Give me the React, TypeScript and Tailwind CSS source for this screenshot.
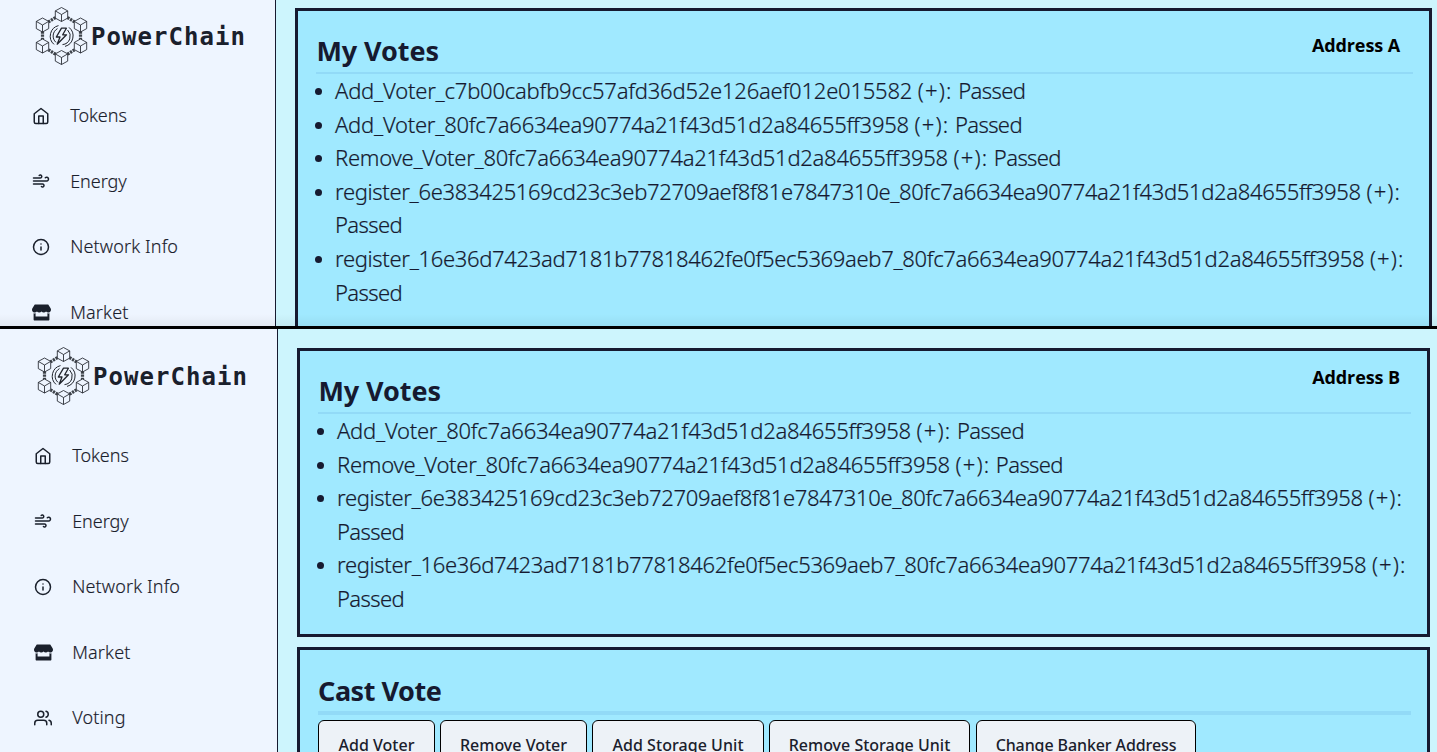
import type { ReactNode } from 'react';
import { FiHome, FiInfo, FiUsers, FiWind } from 'react-icons/fi';
import { FaStore } from 'react-icons/fa';

const cubes: [number, number][] = [
  [27.5, 9.5],
  [46.5, 20],
  [46.5, 41],
  [27.5, 52.5],
  [8.5, 41],
  [8.5, 20],
];

function Logo() {
  return (
    <svg width="56" height="62" viewBox="0 0 56 62" fill="none" stroke="#20242c" className="shrink-0">
      <g strokeWidth="3.2" strokeDasharray="2.2 0.9" opacity="0.85">
        <path d="M33.5 12.6 40.5 16.8M21.5 12.6 14.5 16.8M33.5 49.2 40.5 44.8M21.5 49.2 14.5 44.8M8.5 26.5v8M46.5 26.5v8" />
      </g>
      {cubes.map(([x, y]) => (
        <g key={`${x}-${y}`} transform={`translate(${x} ${y})`} strokeWidth="0.85" strokeLinejoin="round">
          <path d="M0-7 6.2-3.6V3.6L0 7-6.2 3.6V-3.6Z" fill="#eef5ff" />
          <path d="M-6.2-3.6 0 0 6.2-3.6M0 0V7" />
        </g>
      ))}
      <path d="M24.5 20.6A10.9 10.9 0 0 0 20 39.4M31 41.4A10.9 10.9 0 0 0 35 22.4" strokeWidth="1" />
      <path d="M23.5 23.6A8.5 8.5 0 0 0 22 37.4M28.5 39.6A8.5 8.5 0 0 0 33.6 25" strokeWidth="1" />
      <path
        d="M27.5 23.2 22.3 32H26L23.2 39.2 32.5 29.8H28.7L32.4 23.2Z"
        strokeWidth="1.3"
        strokeLinejoin="round"
      />
    </svg>
  );
}

const links = [
  { label: 'Tokens', icon: <FiHome size={18} />, tracking: 'tracking-[-0.05px]' },
  { label: 'Energy', icon: <FiWind size={18} />, tracking: 'tracking-[-0.05px]' },
  { label: 'Network Info', icon: <FiInfo size={18} />, tracking: 'tracking-[0.14px]' },
  { label: 'Market', icon: <FaStore size={19} />, tracking: 'tracking-[0.15px]' },
  { label: 'Voting', icon: <FiUsers size={18} />, tracking: 'tracking-[0.15px]' },
];

function Sidebar({ count, className }: { count: number; className: string }) {
  return (
    <aside className={`shrink-0 border-r border-[#161a30] bg-[#eef5ff] text-[#1a202c] ${className}`}>
      <div className="flex h-[62px] items-center">
        <Logo />
        <span className="ml-px pt-[2px] font-['DejaVu_Sans_Mono',monospace] text-[24px] font-bold tracking-[1.05px]">
          PowerChain
        </span>
      </div>
      <nav className="-ml-[2px] mt-[16px]">
        {links.slice(0, count).map((l) => (
          <div key={l.label} className="flex h-[65.5px] items-center">
            <span className="-ml-[0.2px] flex w-[19px] justify-center">{l.icon}</span>
            <span className={`ml-[19.4px] text-[18px] font-light [-webkit-text-stroke:0.15px] ${l.tracking}`}>
              {l.label}
            </span>
          </div>
        ))}
      </nav>
    </aside>
  );
}

type Vote = { name: string; tracking: string };

const votesB: Vote[] = [
  { name: 'Add_Voter_80fc7a6634ea90774a21f43d51d2a84655ff3958', tracking: 'tracking-[-0.26px]' },
  { name: 'Remove_Voter_80fc7a6634ea90774a21f43d51d2a84655ff3958', tracking: 'tracking-[-0.27px]' },
  {
    name: 'register_6e383425169cd23c3eb72709aef8f81e7847310e_80fc7a6634ea90774a21f43d51d2a84655ff3958',
    tracking: 'tracking-[-0.335px]',
  },
  {
    name: 'register_16e36d7423ad7181b77818462fe0f5ec5369aeb7_80fc7a6634ea90774a21f43d51d2a84655ff3958',
    tracking: 'tracking-[-0.33px]',
  },
];

const votesA: Vote[] = [
  { name: 'Add_Voter_c7b00cabfb9cc57afd36d52e126aef012e015582', tracking: 'tracking-[-0.22px]' },
  ...votesB,
];

function Card({ children, className = '' }: { children: ReactNode; className?: string }) {
  return (
    <section
      className={`border-[3px] border-[#161a30] bg-[#a0e9ff] pt-[18px] pr-[16px] pl-[18px] text-[#161a30] ${className}`}
    >
      {children}
    </section>
  );
}

function MyVotes({ votes }: { votes: Vote[] }) {
  return (
    <Card className="pb-[18px]">
      <h2 className="h-[45px] border-b-2 border-[#92daf7] pl-[0.5px] text-[27px] leading-[43px] font-bold tracking-[-0.1px]">
        My Votes
      </h2>
      <ul className="text-[22px] leading-[33.6px] font-light [-webkit-text-stroke:0.2px]">
        {votes.map((v) => (
          <li key={v.name} className="flex">
            <span className="mt-[14px] -ml-px mr-[13px] size-[7px] shrink-0 rounded-full bg-[#161a30]" />
            <span>
              <span className={v.tracking}>{v.name}</span> <span className="tracking-[1.1px]">(+):</span>{' '}
              <span className="tracking-[-0.6px]">Passed</span>
            </span>
          </li>
        ))}
      </ul>
    </Card>
  );
}

const actions = [
  { label: 'Add Voter', width: 'w-[117px]', tracking: 'tracking-[0px]' },
  { label: 'Remove Voter', width: 'w-[147px]', tracking: 'tracking-[0px]' },
  { label: 'Add Storage Unit', width: 'w-[172px]', tracking: 'tracking-[0.05px]' },
  { label: 'Remove Storage Unit', width: 'w-[201px]', tracking: 'tracking-[0px]' },
  { label: 'Change Banker Address', width: 'w-[220px]', tracking: 'tracking-[-0.1px]' },
];

function CastVote() {
  return (
    <Card className="mt-[10px] h-[200px]">
      <h2 className="h-[47px] border-b-4 border-[#92daf7] text-[27px] leading-[46px] font-bold tracking-[-0.45px]">
        Cast Vote
      </h2>
      <div className="mt-[5px] flex gap-[5px]">
        {actions.map((a) => (
          <button
            key={a.label}
            className={`h-[50px] shrink-0 rounded-[6px] border border-black bg-[#edf2f7] text-[16px] font-medium whitespace-nowrap text-[#1a202c] last:ml-px ${a.width} ${a.tracking}`}
          >
            {a.label}
          </button>
        ))}
      </div>
    </Card>
  );
}

export default function App() {
  return (
    <div className="flex h-[752px] w-[1437px] flex-col overflow-hidden bg-[#cdf5fd] font-['Noto_Sans',sans-serif]">
      <div className="relative flex h-[326px] overflow-hidden">
        <Sidebar count={4} className="w-[276px] pt-[5px] pl-[34px]" />
        <main className="flex-1 pt-[8px] pr-[5px] pl-[19px]">
          <MyVotes votes={votesA} />
        </main>
        <span className="absolute top-[33px] right-[37px] font-['Open_Sans',sans-serif] text-[18px] leading-[25px] font-bold tracking-[-0.1px] text-black">
          Address A
        </span>
        <div className="absolute inset-x-0 bottom-0 h-[12px] bg-linear-to-b from-transparent to-black/5" />
      </div>
      <div className="h-[3px] shrink-0 bg-black" />
      <div className="relative flex h-[423px] overflow-hidden">
        <Sidebar count={5} className="w-[278px] pt-[16px] pl-[36px]" />
        <main className="flex-1 pt-[19px] pr-[7px] pl-[19px]">
          <MyVotes votes={votesB} />
          <CastVote />
        </main>
        <span className="absolute top-[36px] right-[37px] font-['Open_Sans',sans-serif] text-[18px] leading-[25px] font-bold tracking-[-0.1px] text-black">
          Address B
        </span>
      </div>
    </div>
  );
}
